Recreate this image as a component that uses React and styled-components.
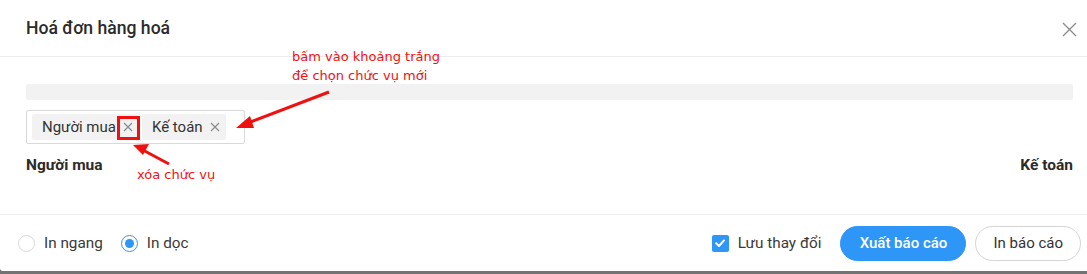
import React from 'react'
import styled, { createGlobalStyle } from 'styled-components'

const Global = createGlobalStyle`
  body {
    margin: 0;
    background: #737373;
    font-family: Roboto, 'Noto Sans', sans-serif;
  }
`

const CloseIcon = () => (
  <svg width="15" height="15" viewBox="0 0 15 15">
    <path d="M1 1 L14 14 M14 1 L1 14" stroke="#8a8a8a" strokeWidth="1.3" fill="none" />
  </svg>
)

const SmallX = () => (
  <svg width="10" height="10" viewBox="0 0 10 10">
    <path d="M1 1 L9 9 M9 1 L1 9" stroke="#8c8c8c" strokeWidth="1.2" fill="none" />
  </svg>
)

const Check = () => (
  <svg width="12" height="12" viewBox="0 0 12 12">
    <path d="M2.2 6.2 L5 9 L10 3.4" stroke="#fff" strokeWidth="2" fill="none" strokeLinecap="round" strokeLinejoin="round" />
  </svg>
)

const App = () => {
  return (
    <>
      <Global />
      <Modal>
        <Header>
          <Title>Hoá đơn hàng hoá</Title>
          <CloseBtn><CloseIcon /></CloseBtn>
        </Header>
        <Body>
          <GrayBar />
          <TagBox>
            <Tag>
              Người mua
              <TagClose><SmallX /></TagClose>
            </Tag>
            <Tag>
              Kế toán
              <TagClose><SmallX /></TagClose>
            </Tag>
          </TagBox>
          <Signers>
            <Signer>Người mua</Signer>
            <Signer>Kế toán</Signer>
          </Signers>
        </Body>
        <Footer>
          <Radios>
            <Option>
              <Radio />
              In ngang
            </Option>
            <Option>
              <Radio checked />
              In dọc
            </Option>
          </Radios>
          <Actions>
            <Option>
              <CheckBox><Check /></CheckBox>
              Lưu thay đổi
            </Option>
            <Button primary>Xuất báo cáo</Button>
            <Button>In báo cáo</Button>
          </Actions>
        </Footer>

        <RedBox />
        <Note style={{ left: 292, top: 47 }}>
          bấm vào khoảng trắng<br />để chọn chức vụ mới
        </Note>
        <Note style={{ left: 137, top: 165 }}>xóa chức vụ</Note>
        <Arrows width="1087" height="274" viewBox="0 0 1087 274">
          <line x1="329" y1="92" x2="248" y2="123" stroke="#f01010" strokeWidth="3" />
          <polygon points="236,128 250,116 254,128" fill="#f01010" />
          <line x1="169" y1="164" x2="141" y2="149" stroke="#f01010" strokeWidth="3" />
          <polygon points="133,145 149,144 143,155" fill="#f01010" />
        </Arrows>
      </Modal>
    </>
  )
}

export default App

const Modal = styled.div`
  position: relative;
  width: 1087px;
  height: 271px;
  background: #fff;
  border-bottom-left-radius: 3px;
  display: flex;
  flex-direction: column;
  overflow: hidden;
`

const Header = styled.div`
  height: 56px;
  border-bottom: 1px solid #ececec;
  display: flex;
  align-items: center;
  justify-content: space-between;
  padding: 0 10px 0 26px;
  flex-shrink: 0;
`

const Title = styled.div`
  font-size: 17.6px;
  font-weight: 500;
  color: #2b2b2b;
`

const CloseBtn = styled.div`
  display: flex;
  align-items: center;
  padding-top: 2px;
`

const Body = styled.div`
  flex: 1;
  padding: 27px 14px 0 26px;
`

const GrayBar = styled.div`
  height: 16px;
  background: #f2f2f2;
  border-radius: 2px;
`

const TagBox = styled.div`
  margin-top: 10px;
  width: 219px;
  height: 34px;
  box-sizing: border-box;
  border: 1px solid #d9d9d9;
  border-radius: 2px;
  display: flex;
  align-items: center;
  gap: 3px;
  padding-left: 5px;
`

const Tag = styled.div`
  height: 26px;
  background: #f2f2f2;
  border-radius: 2px;
  display: flex;
  align-items: center;
  padding: 0 6px 0 10px;
  font-size: 15px;
  color: #333;
`

const TagClose = styled.span`
  display: flex;
  align-items: center;
  margin-left: 7px;
`

const Signers = styled.div`
  display: flex;
  justify-content: space-between;
  margin-top: 12px;
`

const Signer = styled.div`
  font-size: 15.5px;
  font-weight: 700;
  color: #2b2b2b;
`

const Footer = styled.div`
  height: 57px;
  border-top: 1px solid #ececec;
  display: flex;
  align-items: center;
  justify-content: space-between;
  padding: 0 6px 0 18px;
  box-sizing: border-box;
  flex-shrink: 0;
`

const Radios = styled.div`
  display: flex;
  align-items: center;
  gap: 18px;
`

const Option = styled.label`
  display: flex;
  align-items: center;
  gap: 9px;
  font-size: 15.3px;
  color: #3a3a3a;
`

const Radio = styled.span`
  width: 17px;
  height: 17px;
  box-sizing: border-box;
  border-radius: 50%;
  border: 1px solid ${p => (p.checked ? '#2d96f6' : '#d9d9d9')};
  display: flex;
  align-items: center;
  justify-content: center;
  &::after {
    content: '';
    width: 9px;
    height: 9px;
    border-radius: 50%;
    background: ${p => (p.checked ? '#2d96f6' : 'transparent')};
  }
`

const CheckBox = styled.span`
  width: 17px;
  height: 17px;
  border-radius: 2px;
  background: #2d96f6;
  display: flex;
  align-items: center;
  justify-content: center;
`

const Actions = styled.div`
  display: flex;
  align-items: center;
  gap: 9px;
  & > label {
    margin-right: 10px;
  }
`

const Button = styled.div`
  height: 35px;
  box-sizing: border-box;
  border-radius: 18px;
  display: flex;
  align-items: center;
  justify-content: center;
  padding: 0 17px;
  font-size: 15px;
  font-weight: ${p => (p.primary ? 500 : 400)};
  background: ${p => (p.primary ? '#2d96f6' : '#fff')};
  color: ${p => (p.primary ? '#fff' : '#333')};
  border: 1px solid ${p => (p.primary ? '#2d96f6' : '#d4d4d4')};
  min-width: ${p => (p.primary ? '126px' : '105px')};
`

const RedBox = styled.div`
  position: absolute;
  left: 117px;
  top: 116px;
  width: 23px;
  height: 24px;
  box-sizing: border-box;
  border: 3px solid #f01010;
`

const Note = styled.div`
  position: absolute;
  font-family: 'DejaVu Sans', sans-serif;
  font-size: 13px;
  line-height: 19px;
  color: #f01010;
`

const Arrows = styled.svg`
  position: absolute;
  left: 0;
  top: 0;
  pointer-events: none;
`
